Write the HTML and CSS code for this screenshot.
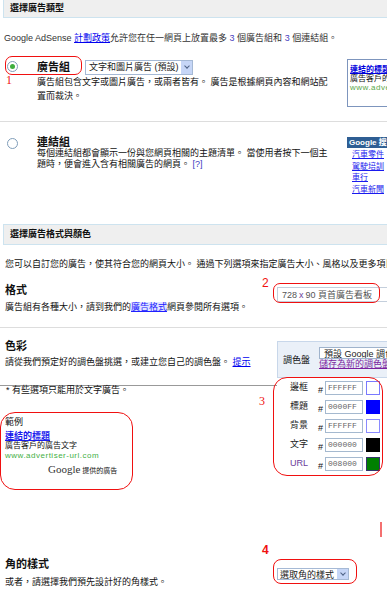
FILE: index.html
```html
<!DOCTYPE html>
<html>
<head>
<meta charset="utf-8">
<title>AdSense 廣告設定</title>
<link rel="stylesheet" href="styles.css">
</head>
<body>
<div class="page">
  <div class="sec-head first">選擇廣告類型</div>
  <p class="intro">Google AdSense <a href="#">計劃政策</a>允許您在任一網頁上放置最多 <span class="num">3</span> 個廣告組和 <span class="num">3</span> 個連結組。</p>

  <div class="type-row ads">
    <span class="radio on"></span>
    <div class="type-body">
      <div class="type-title"><b>廣告組</b><span class="select wide">文字和圖片廣告 (預設)<i class="drop"></i></span></div>
      <p class="type-desc">廣告組包含文字或圖片廣告，或兩者皆有。 廣告是根據網頁內容和網站配<br>置而裁決。</p>
    </div>
    <div class="ad-preview">
      <a href="#">連結的標題</a>
      <span>廣告客戶的廣告文字</span>
      <span class="url">www.advertiser-url.com</span>
      <i class="corner"></i>
    </div>
  </div>

  <hr class="sep">

  <div class="type-row links">
    <span class="radio"></span>
    <div class="type-body">
      <div class="type-title"><b>連結組</b></div>
      <p class="type-desc">每個連結組都會顯示一份與您網頁相關的主題清單。 當使用者按下一個主<br>題時，便會進入含有相關廣告的網頁。 <a class="help" href="#">[?]</a></p>
    </div>
    <div class="link-unit">
      <div class="lu-head">Google 搜尋</div>
      <a href="#">汽車零件</a>
      <a href="#">駕駛培訓</a>
      <a href="#">車行</a>
      <a href="#">汽車新聞</a>
    </div>
  </div>

  <div class="sec-head second">選擇廣告格式與顏色</div>
  <p class="lead">您可以自訂您的廣告，使其符合您的網頁大小。 通過下列選項來指定廣告大小、風格以及更多項目。</p>

  <div class="opt-row format">
    <div class="opt-text">
      <h3>格式</h3>
      <p>廣告組有各種大小，請到我們的<a class="hl" href="#">廣告格式</a>網頁參閱所有選項。</p>
    </div>
    <div class="opt-ctrl">
      <span class="select field">728 <span class="x">x</span> 90 頁首廣告看板</span>
    </div>
  </div>

  <hr class="sep">

  <div class="opt-row color">
    <div class="opt-text">
      <h3>色彩</h3>
      <p>請從我們預定好的調色盤挑選，或建立您自己的調色盤。 <a href="#">提示</a></p>
      <p class="note">* 有些選項只能用於文字廣告。</p>
      <div class="sample">
        <div class="sample-label">範例</div>
        <a href="#">連結的標題</a>
        <div class="s-text">廣告客戶的廣告文字</div>
        <div class="url">www.advertiser-url.com</div>
        <div class="by"><span class="g">Google</span> 提供的廣告</div>
      </div>
    </div>
    <div class="opt-ctrl">
      <div class="palette">
        <span class="pal-label">調色盤</span>
        <div class="pal-ctrl">
          <span class="select pal">預設 Google 調色盤</span>
          <a href="#" class="save">儲存為新的調色盤</a>
        </div>
      </div>
      <div class="colors">
        <div class="c-row"><span class="c-label">邊框</span><span class="hash">#</span><span class="c-input">FFFFFF</span><span class="swatch" style="background:#ffffff;border-color:#7a7aff"></span></div>
        <div class="c-row"><span class="c-label">標題</span><span class="hash">#</span><span class="c-input">0000FF</span><span class="swatch" style="background:#0000ff;border-color:#0000ff"></span></div>
        <div class="c-row"><span class="c-label">背景</span><span class="hash">#</span><span class="c-input">FFFFFF</span><span class="swatch" style="background:#ffffff;border-color:#8a8aff"></span></div>
        <div class="c-row"><span class="c-label">文字</span><span class="hash">#</span><span class="c-input">000000</span><span class="swatch" style="background:#000000;border-color:#000000"></span></div>
        <div class="c-row"><span class="c-label url-label">URL</span><span class="hash">#</span><span class="c-input">008000</span><span class="swatch" style="background:#008000;border-color:#33336a"></span></div>
      </div>
    </div>
  </div>

  <div class="opt-row corner-row">
    <div class="opt-text">
      <h3>角的樣式</h3>
      <p>或者，請選擇我們預先設計好的角樣式。</p>
    </div>
    <div class="opt-ctrl">
      <span class="select corners">選取角的樣式<i class="drop"></i></span>
    </div>
  </div>

  <hr class="sep end">

  <!-- red hand-drawn marks on top of the screenshot -->
  <span class="mark-num n1">1</span>
  <span class="mark-box b1"></span>
  <span class="mark-num n2">2</span>
  <span class="mark-box b2"></span>
  <span class="mark-num n3">3</span>
  <span class="mark-box b3"></span>
  <span class="mark-box b-sample"></span>
  <span class="mark-num n4">4</span>
  <span class="mark-box b4"></span>
  <span class="mark-tick"></span>
</div>
</body>
</html>
```

FILE: styles.css
```css
html, body {
  margin: 0;
  overflow: hidden;
  background: #fff;
}
body {
  font-family: "Liberation Sans", "Noto Sans CJK TC", sans-serif;
  font-size: 9px;
  color: #111;
}
.page {
  position: relative;
  width: 440px;
  height: 600px;
}
p, h3 {
  margin: 0;
}
a {
  color: #0000ee;
}

/* section bars */
.sec-head {
  margin-left: 3px;
  height: 19px;
  line-height: 19px;
  padding-left: 6px;
  background: #efefef;
  border: 1px solid #cde3ef;
  border-right: 0;
  font-weight: bold;
  color: #111;
}
.sec-head.first {
  height: 17px;
  line-height: 16px;
  border-top: 0;
}
.sec-head.second {
  margin-top: 29px;
}

.intro {
  margin-top: 14px;
  padding-left: 4px;
  line-height: 13px;
  color: #333;
  white-space: nowrap;
}
.num {
  color: #4a3fc0;
}

/* ad type rows */
.type-row {
  display: flex;
  align-items: flex-start;
  padding-left: 7px;
}
.type-row.ads {
  margin-top: 14px;
}
.type-row.links {
  margin-top: 14px;
}
.radio {
  flex: none;
  width: 11px;
  height: 11px;
  margin-top: 2px;
  box-sizing: border-box;
  border: 1px solid #7f9db9;
  border-radius: 50%;
  background: #fff;
  display: flex;
  align-items: center;
  justify-content: center;
}
.radio.on::before {
  content: "";
  width: 5px;
  height: 5px;
  border-radius: 50%;
  background: #3fae3f;
}
.type-body {
  flex: none;
  width: 310px;
  margin-left: 19px;
}
.type-title {
  display: flex;
  align-items: center;
  height: 16px;
  line-height: 16px;
}
.type-title b {
  font-size: 11px;
  color: #111;
}
.links .type-title {
  height: 12px;
  line-height: 12px;
}
.type-desc {
  line-height: 14px;
  white-space: nowrap;
}
.links .type-desc {
  line-height: 11px;
}
.help {
  color: #3b3bbf;
  text-decoration: none;
}

/* fake select boxes */
.select {
  display: inline-flex;
  align-items: center;
  box-sizing: border-box;
  border: 1px solid #a5b9d5;
  background: #fff;
  padding-left: 3px;
  color: #222;
  white-space: nowrap;
  overflow: hidden;
}
.select.wide {
  margin-left: 15px;
  width: 108px;
  height: 15px;
}
.drop {
  margin-left: auto;
  width: 11px;
  align-self: stretch;
  background: #c6d6f7;
  border-left: 1px solid #fff;
  display: flex;
  align-items: center;
  justify-content: center;
}
.drop::before {
  content: "";
  width: 3px;
  height: 3px;
  margin-top: -2px;
  border-right: 1.5px solid #4d6185;
  border-bottom: 1.5px solid #4d6185;
  transform: rotate(45deg);
}

.ad-preview {
  position: relative;
  flex: none;
  width: 48px;
  height: 48px;
  box-sizing: border-box;
  border: 1px solid #7d95bd;
  padding: 5px 0 0 2px;
  font-size: 8px;
  line-height: 9px;
  white-space: nowrap;
  overflow: hidden;
}
.ad-preview a,
.ad-preview span {
  display: block;
}
.ad-preview a {
  font-weight: bold;
  color: #0000dd;
}
.ad-preview .url {
  color: #5aa84a;
  letter-spacing: 0.5px;
}
.ad-preview .corner {
  position: absolute;
  right: 0;
  bottom: 0;
  border: 2px solid transparent;
  border-right-color: #3a5a8a;
  border-bottom-color: #3a5a8a;
}

.link-unit {
  flex: none;
  width: 48px;
  margin-top: 1px;
  font-size: 8px;
  white-space: nowrap;
  overflow: hidden;
}
.lu-head {
  height: 11px;
  line-height: 11px;
  padding-left: 2px;
  background: #2e5e93;
  color: #fff;
  font-weight: bold;
}
.link-unit a {
  display: block;
  padding-left: 5px;
  line-height: 11.5px;
  color: #1a1aee;
}
.link-unit a:first-of-type {
  margin-top: 1px;
}

hr.sep {
  height: 0;
  margin: 14px 0 0;
  border: 0;
  border-top: 1px solid #dddddd;
}

.lead {
  margin-top: 13px;
  padding-left: 5px;
  line-height: 13px;
  white-space: nowrap;
}

/* format / colour / corner options */
.opt-row {
  display: grid;
  grid-template-columns: 272px 1fr;
  padding-left: 5px;
}
.opt-text h3 {
  font-size: 11px;
  line-height: 16px;
  color: #111;
}
.opt-text p {
  margin-top: 2px;
  line-height: 14px;
  white-space: nowrap;
}
.format {
  margin-top: 11px;
}
.format + hr.sep {
  margin-top: 13px;
}
.hl {
  color: #2020ff;
  background: #e2e4ff;
}
.select.field {
  margin-top: 5px;
  width: 112px;
  height: 15px;
  padding-left: 4px;
  border-color: #c4cfdc;
  color: #555;
}
.select.field .x {
  color: #6a3d9a;
  margin: 0 2px;
}

.color h3 {
  margin-top: 10px;
}
.color .opt-text p {
  margin-top: 1px;
}
.color .opt-text p.note {
  margin: 16px 0 0 -5px;
  padding-left: 6px;
  border-top: 1px solid #999;
  line-height: 9px;
}
.sample {
  margin-top: 21px;
  padding-bottom: 14px;
}
.sample-label {
  line-height: 12px;
  color: #111;
}
.sample a {
  display: block;
  margin-top: 3px;
  line-height: 10px;
  font-weight: bold;
  color: #1a1aee;
}
.s-text {
  font-size: 8px;
  line-height: 10px;
}
.sample .url {
  font-size: 8px;
  line-height: 9px;
  letter-spacing: 0.5px;
  color: #44b044;
}
.by {
  margin-top: 2px;
  padding-left: 43px;
  line-height: 14px;
  font-size: 7px;
}
.by .g {
  font-family: "Liberation Serif", serif;
  font-size: 11px;
  color: #333;
}

.palette {
  display: flex;
  margin-top: 13px;
  height: 37px;
  box-sizing: border-box;
  padding: 5px 0 0 5px;
  background: #eaf0f8;
  border: 1px solid #c8d7ea;
  border-right: 0;
}
.pal-label {
  margin-top: 8px;
  line-height: 10px;
  color: #111;
}
.pal-ctrl {
  margin-left: 9px;
  display: flex;
  flex-direction: column;
}
.select.pal {
  width: 90px;
  height: 12px;
  padding-left: 4px;
  border-color: #9fb3cc;
}
.save {
  line-height: 10px;
  color: #7a1fa0;
  white-space: nowrap;
}

.colors {
  padding-left: 13px;
}
.c-row {
  display: flex;
  align-items: center;
  height: 19px;
}
.c-label {
  width: 28px;
  margin-top: -2px;
  color: #222;
}
.url-label {
  color: #6a3d9a;
}
.hash {
  width: 7px;
  margin-top: 4px;
}
.c-input {
  width: 38px;
  height: 14px;
  box-sizing: border-box;
  border: 1px solid #a5b9cf;
  padding-left: 2px;
  line-height: 12px;
  font-family: "Liberation Mono", monospace;
  font-size: 8px;
  color: #666;
  overflow: hidden;
}
.swatch {
  width: 14px;
  height: 14px;
  margin-left: 3px;
  box-sizing: border-box;
  border: 1px solid;
}

.corner-row {
  margin-top: 64px;
}
.corner-row .opt-text p {
  margin-top: 3px;
}
.select.corners {
  margin-top: 12px;
  width: 72px;
  height: 12px;
  padding-left: 2px;
}

hr.sep.end {
  margin-top: 12px;
  border-top-color: #cccccc;
}

/* red annotation marks */
.mark-num {
  position: absolute;
  color: #f01010;
  font-size: 12px;
  line-height: 12px;
}
.n1 {
  left: 6px;
  top: 74px;
  font-family: "Liberation Serif", serif;
}
.n2 {
  left: 262px;
  top: 277px;
}
.n3 {
  left: 259px;
  top: 395px;
  font-family: "Liberation Serif", serif;
}
.n4 {
  left: 262px;
  top: 544px;
  font-weight: bold;
}
.mark-box {
  position: absolute;
  border: 1.5px solid #f01010;
  border-radius: 7px;
}
.b1 {
  left: 5px;
  top: 56px;
  width: 75px;
  height: 17px;
}
.b2 {
  left: 273px;
  top: 283px;
  width: 105px;
  height: 18px;
}
.b3 {
  left: 273px;
  top: 377px;
  width: 108px;
  height: 97px;
  border-radius: 14px;
}
.b-sample {
  left: 0;
  top: 412px;
  width: 131px;
  height: 76px;
  border-radius: 15px;
}
.b4 {
  left: 273px;
  top: 559px;
  width: 82px;
  height: 23px;
  border-radius: 8px;
}
.mark-tick {
  position: absolute;
  left: 380px;
  top: 522px;
  width: 2px;
  height: 15px;
  background: #f47070;
}
```
